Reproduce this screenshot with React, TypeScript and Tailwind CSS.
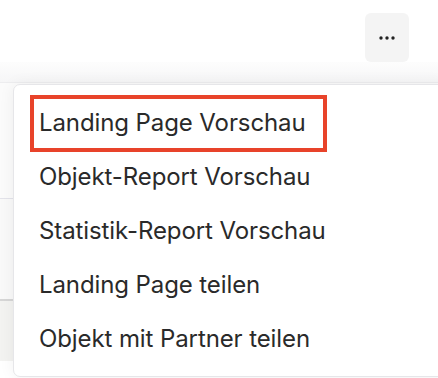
const items = [
  "Landing Page Vorschau",
  "Objekt-Report Vorschau",
  "Statistik-Report Vorschau",
  "Landing Page teilen",
  "Objekt mit Partner teilen",
];

export default function App() {
  return (
    <div
      className="relative h-[378px] w-[438px] overflow-hidden bg-white"
      style={{ fontFamily: "Inter, 'Noto Sans', sans-serif" }}
    >
      {/* Top bar with action button */}
      <div className="flex h-[62px] justify-end bg-white pr-[29px] pt-[13px]">
        <button className="flex h-[49px] w-[44px] items-center justify-center rounded-[6px] bg-[#f4f4f4]">
          <svg width="16" height="4" viewBox="0 0 16 4">
            <circle cx="2" cy="2" r="1.7" fill="#222" />
            <circle cx="8" cy="2" r="1.7" fill="#222" />
            <circle cx="14" cy="2" r="1.7" fill="#222" />
          </svg>
        </button>
      </div>
      <div className="h-[21px] bg-gradient-to-b from-[#fdfdfd] to-[#f6f6f7] border-b border-[#ededef]" />

      {/* Table behind the menu */}
      <div className="flex flex-col">
        <div className="h-[116px] bg-[#fbfbfb] border-b border-[#e3e3ea]" />
        <div className="h-[102px] bg-[#f9f9f9] border-b-2 border-[#d6d6d6]" />
        <div className="h-[60px] bg-[#f3f3f1]" />
      </div>

      {/* Dropdown menu */}
      <div className="absolute left-[13px] top-[84px] w-[440px] rounded-[7px] border border-[#e6e6e9] bg-white pt-[11px] pb-[10px] shadow-[0_0_16px_rgba(0,0,0,0.06)]">
        {items.map((item, i) => (
          <div
            key={item}
            className="relative flex h-[54px] items-center pl-[25px] text-[24px] tracking-[-0.1px] text-[#2a2a2a]"
          >
            {i === 0 && (
              <span className="absolute left-[16px] top-[-1px] h-[57px] w-[297px] border-4 border-[#e8432a]" />
            )}
            {item}
          </div>
        ))}
      </div>
    </div>
  );
}
